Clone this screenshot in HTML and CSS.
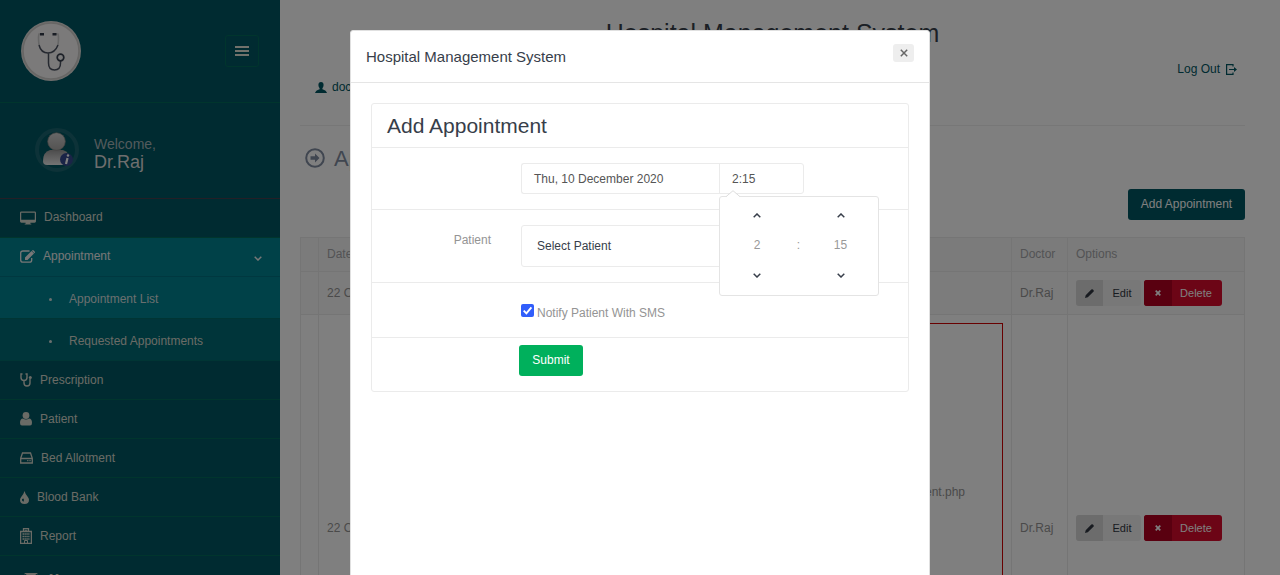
FILE: index.html
```html
<!DOCTYPE html>
<html lang="en">
<head>
<meta charset="utf-8">
<title>Hospital Management System</title>
<link rel="stylesheet" href="styles.css">
</head>
<body>
<div class="page">
  <aside class="sidebar">
    <div class="brand">
      <svg class="logo" width="60" height="60" viewBox="0 0 60 60"><circle cx="30" cy="30" r="30" fill="#dddcd9"/><circle cx="30" cy="30" r="28" fill="#f6f5f5" stroke="#cfcdca" stroke-width="1.600"/><g fill="none"><path d="M20 13h-2q-1 3 0 11M34 13h3q1 3 0 11" stroke="#ccc" stroke-width="1.600"/><path d="M18 24q2 8 9 8t10-8M27.500 32v10q0 7 6 7t6-7v-3" stroke="#4c5361" stroke-width="1.500"/><circle cx="39.500" cy="36.500" r="3.300" stroke="#39404e" stroke-width="1.700"/></g><path d="M19 13.200h4M31.500 13.200h4" stroke="#333b48" stroke-width="2.500"/></svg>
      <span class="toggle"><svg width="14" height="10" viewBox="0 0 14 10"><path d="M0 1h14M0 5h14M0 9h14" stroke="#e4e4d8" stroke-width="2"/></svg></span>
    </div>
    <div class="user">
      <svg width="44" height="44" viewBox="0 0 44 44"><defs><linearGradient id="skin" x1="0" y1="0" x2="0" y2="1"><stop offset="0" stop-color="#d0d0d0"/><stop offset="1" stop-color="#a8a6a4"/></linearGradient><linearGradient id="coat" x1="0" y1="0" x2="0" y2="1"><stop offset="0" stop-color="#999"/><stop offset="1" stop-color="#e8e8e8"/></linearGradient></defs><circle cx="22" cy="22" r="20" fill="none" stroke="#1a6570" stroke-width="4"/><path d="M8 33q0-9 7-11h13q7 2 7 11-1 4-4 4H12q-4 0-4-4z" fill="url(#coat)"/><circle cx="21.500" cy="13.500" r="8.800" fill="url(#skin)" stroke="#8a8784" stroke-width=".7"/><circle cx="31.500" cy="31.500" r="6.500" fill="#34488e"/><path d="M32.500 30l-1.500 6" stroke="#fff" stroke-width="2.200"/><circle cx="33" cy="27.500" r="1.200" fill="#fff"/></svg>
      <div class="who"><span>Welcome,</span><strong>Dr.Raj</strong></div>
    </div>
    <nav class="menu">
      <a class="item"><svg width="16" height="14" viewBox="0 0 17 14"><path d="M1.500 0h14Q17 0 17 1.500v9q0 1.500-1.500 1.500H11v1h1v1H5v-1h1v-1H1.500Q0 12 0 10.500v-9Q0 0 1.500 0zM1.300 1.300v7.500h14.400V1.300z" fill="currentColor" fill-rule="evenodd"/></svg><span class="g8">Dashboard</span></a>
      <a class="item open"><svg width="15" height="13" viewBox="0 0 15 13"><path d="M9.500 1H3Q.7 1 .7 3v7q0 2.200 2.300 2.200h6.500q2.200 0 2.200-2.200V8" fill="none" stroke="currentColor" stroke-width="1.300"/><path d="M5 10V7.500L11.500 1 14 3.500 7.500 10zM12.200.4q.8-.7 1.500 0l1 1q.6.8 0 1.500l-.3.3L11.900.8z" fill="currentColor"/></svg><span class="g8">Appointment</span><svg class="chev" width="8" height="5" viewBox="0 0 8 5"><path d="M.7.7L4 4 7.300.7" fill="none" stroke="currentColor" stroke-width="1.500"/></svg></a>
      <a class="sub current"><i></i>Appointment List</a>
      <a class="sub"><i></i>Requested Appointments</a>
      <a class="item"><svg width="12" height="14" viewBox="0 0 12 14"><path d="M2.500 1H1v3.500q0 3 3 3t3-3V1H5.500M4 7.500V10q0 3 3 3t3-3V6" fill="none" stroke="currentColor" stroke-width="1.400"/><circle cx="10.300" cy="4.500" r="1.500" fill="currentColor"/></svg><span class="g8">Prescription</span></a>
      <a class="item"><svg width="12" height="14" viewBox="0 0 12 14"><circle cx="6" cy="3.500" r="3.400" fill="currentColor"/><path d="M3 6.500Q0 6.500 0 11q0 2.500 2 2.500h8q2 0 2-2.500 0-4.500-3-4.500-3 1.800-6 0z" fill="currentColor"/></svg><span class="g8">Patient</span></a>
      <a class="item"><svg width="13" height="12" viewBox="0 0 13 12"><path d="M.7 6.300L2.500 1h8l1.800 5.300V11H.7zM.7 6.500h11.600" fill="none" stroke="currentColor" stroke-width="1.300"/><path d="M7 8.700h1.500M9.300 8.700h1.500" stroke="currentColor"/></svg><span class="g8">Bed Allotment</span></a>
      <a class="item"><svg width="9" height="13" viewBox="0 0 9 13"><path d="M4.500 0Q5.300 3 7.500 5.500 9 7.200 9 8.700 9 13 4.500 13T0 8.700Q0 7.200 1.500 5.500 3.700 3 4.500 0zM2 8q-.5 2 1.500 2.800Q4.500 9 3.500 7.500z" fill="currentColor" fill-rule="evenodd"/></svg><span class="g8">Blood Bank</span></a>
      <a class="item"><svg width="12" height="16" viewBox="0 0 12 16"><path d="M.6 3.500h10.800v11.900H.6zM3.500 3.500V.7h5v2.800" fill="none" stroke="currentColor" stroke-width="1.300"/><path d="M2.500 6h7M2.500 8.500h7M2.500 11h7" stroke="currentColor" stroke-width="1.300" stroke-dasharray="1.500 .4"/><path d="M4.500 15v-2.500h3V15M4.700 2.300h2.600" fill="none" stroke="currentColor"/></svg><span class="g8">Report</span></a>
      <a class="item mail"><svg width="14" height="10" viewBox="0 0 14 10"><path d="M0 0h14L7 5zM0 1.500l7 5 7-5V10H0z" fill="currentColor"/></svg><span>Message</span></a>
    </nav>
  </aside>
  <main class="main">
    <h2 class="site">Hospital Management System</h2>
    <div class="account">
      <a class="name"><svg width="12" height="11" viewBox="0 0 12 11"><path d="M6 0Q8.600 0 8.600 3q0 2-1.200 3.200v1Q11.500 8.500 12 11H0q.5-2.500 4.600-3.800v-1Q3.400 5 3.400 3 3.400 0 6 0z" fill="currentColor"/></svg>doctor</a>
      <a class="logout">Log Out<svg width="11" height="11" viewBox="0 0 11 11"><path d="M7 2.500V.6H.6v9.800H7V8.500M3 5.500h6" fill="none" stroke="currentColor" stroke-width="1.200"/><path d="M8 3l3 2.500L8 8z" fill="currentColor"/></svg></a>
    </div>
    <h3 class="heading"><svg width="20" height="20" viewBox="0 0 20 20"><circle cx="10" cy="10" r="8.800" fill="none" stroke="currentColor" stroke-width="2"/><path d="M5.500 8.300H10V5.600l4.500 4.400-4.500 4.400v-2.700H5.500z" fill="currentColor"/></svg>Appointment</h3>
    <div class="actions"><a class="add">Add Appointment</a></div>
    <div class="table">
      <div class="tr shade head"><div></div><div>Date</div><div></div><div>Doctor</div><div>Options</div></div>
      <div class="tr shade first"><div></div><div>22 Oct</div><div></div><div>Dr.Raj</div><div class="opts"><a class="btn edit"><b><svg width="9" height="9" viewBox="0 0 9 9"><path d="M0 9l.7-2.800L6.300.6q.8-.8 1.600 0l.5.500q.8.800 0 1.600L2.800 8.300z" fill="currentColor"/></svg></b><span>Edit</span></a><a class="btn del"><b><svg width="6" height="6" viewBox="0 0 6 6"><path d="M.7.7l4.600 4.600M5.300.7L.7 5.300" stroke="currentColor" stroke-width="1.700"/></svg></b><span>Delete</span></a></div></div>
      <div class="tr second"><div></div><div>22 Oct</div><div class="notice"><p>ent.php</p></div><div>Dr.Raj</div><div class="opts"><a class="btn edit"><b><svg width="9" height="9" viewBox="0 0 9 9"><path d="M0 9l.7-2.800L6.300.6q.8-.8 1.600 0l.5.500q.8.800 0 1.600L2.800 8.300z" fill="currentColor"/></svg></b><span>Edit</span></a><a class="btn del"><b><svg width="6" height="6" viewBox="0 0 6 6"><path d="M.7.7l4.600 4.600M5.300.7L.7 5.300" stroke="currentColor" stroke-width="1.700"/></svg></b><span>Delete</span></a></div></div>
    </div>
  </main>
</div>
<div class="backdrop">
  <section class="modal">
    <header class="modal-head"><h4>Hospital Management System</h4><button class="close"><svg width="8" height="8" viewBox="0 0 8 8"><path d="M.8.800l6.400 6.400M7.200.8L.8 7.200" stroke="#666" stroke-width="1.500"/></svg></button></header>
    <div class="panel">
      <h3 class="panel-title">Add Appointment</h3>
      <div class="row when"><label></label>
        <div class="datetime"><div class="date">Thu, 10 December 2020</div><div class="time">2:15
          <div class="picker">
            <svg class="tip" width="14" height="7" viewBox="0 0 14 7"><path d="M0 7l7-6.300L14 7z" fill="#fff"/><path d="M0 6.700l7-6 7 6" fill="none" stroke="#ddd"/></svg>
            <svg width="8" height="5" viewBox="0 0 8 5"><path d="M.7 4.200L4 1l3.300 3.200" fill="none" stroke="#373e4a" stroke-width="1.500"/></svg><span></span><svg width="8" height="5" viewBox="0 0 8 5"><path d="M.7 4.200L4 1l3.300 3.200" fill="none" stroke="#373e4a" stroke-width="1.500"/></svg>
            <span>2</span><span>:</span><span>15</span>
            <svg width="8" height="5" viewBox="0 0 8 5"><path d="M.7.8L4 4 7.300.8" fill="none" stroke="#373e4a" stroke-width="1.500"/></svg><span></span><svg width="8" height="5" viewBox="0 0 8 5"><path d="M.7.8L4 4 7.300.8" fill="none" stroke="#373e4a" stroke-width="1.500"/></svg>
          </div></div></div>
      </div>
      <div class="row patient"><label>Patient</label><div class="select">Select Patient</div></div>
      <div class="row notify"><label></label><div class="check"><svg width="13" height="13" viewBox="0 0 13 13"><rect width="13" height="13" rx="2" fill="#315efb"/><path d="M2.700 6.700l2.700 2.700 5-6" fill="none" stroke="#fff" stroke-width="1.900"/></svg>Notify Patient With SMS</div></div>
      <div class="row send"><button class="submit">Submit</button></div>
    </div>
  </section>
</div>
</body>
</html>
```
FILE: styles.css
```css
* { box-sizing: border-box; }
html, body { margin: 0; height: 575px; overflow: hidden; }
body { font: 12px/17px "Liberation Sans", Arial, sans-serif; color: #949494; background: #fff; }
h2, h3, h4, p { margin: 0; font-weight: 400; }
svg { display: block; flex: none; }
button { font: inherit; border: 0; padding: 0; }
.page { display: flex; height: 575px; overflow: hidden; }

.sidebar { width: 280px; flex: none; background: #005662; color: #d5d7cc; height: 640px; }
.brand { height: 103px; border-bottom: 1px solid #006a5a; padding: 0 21px; display: flex; align-items: center; justify-content: space-between; }
.toggle { width: 34px; height: 32px; border: 1px solid #006a5a; border-radius: 3px; display: flex; align-items: center; justify-content: center; }
.user { height: 96px; border-bottom: 1px solid #493f4c; padding: 0 35px 2px; display: flex; align-items: center; gap: 15px; }
.who { display: flex; flex-direction: column; padding-top: 6px; }
.who span { font-size: 14px; line-height: 18px; color: #a6b4b8; }
.who strong { font-size: 18px; line-height: 18px; font-weight: 400; color: #ddd; }
.item { display: flex; align-items: center; height: 39px; padding: 0 18px 0 20px; border-bottom: 1px solid #006a5a; }
.menu .item:first-child, .item.open { padding-bottom: 1px; }
.g8 { margin-left: 8px; }
.item.open { background: #008290; color: #eee; border-color: #007080; }
.chev { margin-left: auto; margin-top: 4px; }
.sub { display: flex; align-items: center; height: 42px; padding: 3px 0 0 49px; background: #006a74; border-bottom: 1px solid #006a68; }
.sub.current { background: #008290; color: #d5dfdf; }
.sub i { width: 3px; height: 3px; border-radius: 50%; background: #d5dfdf; margin-right: 17px; }
.mail { align-items: flex-start; padding: 17px 0 0 24px; }
.mail span { margin: -2px 0 0 11px; font-weight: 700; }

.main { flex: 1; padding: 0 35px 0 20px; display: flex; flex-direction: column; }
.site { text-align: center; font-size: 25px; line-height: 30px; color: #373e4a; margin-top: 18px; }
.account { height: 78px; border-bottom: 1px solid #eee; display: flex; flex: none; justify-content: space-between; color: #005662; padding: 13px 8px 0 15px; }
.account a { display: flex; align-items: center; height: 17px; gap: 5px; }
.account .logout { gap: 6px; }
.account .name { margin-top: 18px; }
.heading { display: flex; flex: none; align-items: center; gap: 9px; height: 24px; margin-top: 20px; padding-left: 5px; font-size: 22px; color: #818da1; }
.actions { display: flex; flex: none; justify-content: flex-end; margin-top: 19px; }
.add { background: #005662; color: #fff; border-radius: 3px; width: 117px; height: 31px; line-height: 31px; text-align: center; }
.table { margin-top: 17px; border: 1px solid #ebebeb; border-bottom: 0; flex: none; }
.tr { display: grid; grid-template-columns: 18px 112px 581px 56px 1fr; border-bottom: 1px solid #ebebeb; }
.tr > div { border-right: 1px solid #ebebeb; padding-left: 8px; display: flex; align-items: center; }
.tr > div:last-child { border-right: 0; }
.shade { background: #f8f8f8; }
.head { height: 34px; background: #f7f7f7; color: #a6a7aa; }
.first { height: 43px; }
.second { height: 427px; }
.tr > div.notice { padding: 8px; align-items: stretch; }
.notice p { flex: 1; border: 1px solid #d00000; text-align: right; padding: 160px 37px 0 0; }
.opts { gap: 3px; }
.btn { display: flex; height: 26px; border-radius: 3px; overflow: hidden; line-height: 26px; font-size: 11px; }
.btn b { display: flex; align-items: center; justify-content: center; }
.btn span { text-align: center; }
.edit { width: 65px; background: #f0f0f1; color: #303641; }
.edit b { width: 27px; background: #d8d8d8; }
.edit span { width: 38px; }
.del { width: 78px; background: #d90a2c; color: #fff; }
.del b { width: 28px; background: #b30020; }
.del span { width: 48px; }

.account { height: 78px; }
.site { flex: none; }

.backdrop { position: fixed; inset: 0; background: rgba(0,0,0,.5); padding: 30px 0 0 350px; overflow: hidden; }
.modal { width: 580px; height: 600px; background: #fff; border: 1px solid #e0e0e0; border-radius: 3px 3px 0 0; }
.modal-head { height: 52px; border-bottom: 1px solid #e5e5e5; display: flex; justify-content: space-between; padding: 13px 15px; }
.modal-head h4 { font-size: 15px; line-height: 26px; color: #373e4a; }
.close { width: 21px; height: 18px; background: #eee; border-radius: 3px; display: flex; align-items: center; justify-content: center; }
.panel { margin: 20px; border: 1px solid #ebebeb; border-radius: 3px; height: 289px; }
.panel-title { height: 44px; border-bottom: 1px solid #ebebeb; padding-left: 15px; font-size: 21px; line-height: 44px; color: #373e4a; }
.row { display: flex; border-bottom: 1px solid #ebebeb; }
.row label { width: 119px; margin-right: 30px; text-align: right; }
.row:last-child { border-bottom: 0; }
.when { height: 62px; padding-top: 15px; }
.datetime { display: flex; color: #555; }
.date, .time { height: 31px; border: 1px solid #ebebeb; line-height: 30px; padding-left: 12px; }
.date { width: 199px; border-radius: 3px 0 0 3px; border-right: 0; }
.time { width: 85px; border-radius: 0 3px 3px 0; position: relative; margin-left: -1px; }
.picker { position: absolute; left: -1px; top: 32px; width: 160px; height: 100px; border: 1px solid #e4e4e4; border-radius: 3px; background: #fff; color: #999; display: grid; grid-template-columns: 74px 9px 75px; grid-template-rows: 30px 30px 30px; place-items: center; padding-top: 3px; line-height: 17px; z-index: 2; }
.tip { position: absolute; left: 6px; top: -7px; }
.patient { height: 73px; padding-top: 15px; }
.patient label { padding-top: 7px; }
.select { width: 284px; height: 42px; border: 1px solid #ebebeb; border-radius: 3px; padding-left: 15px; line-height: 40px; color: #373e4a; }
.notify { height: 55px; padding-top: 21px; }
.check { display: flex; gap: 3px; line-height: 19px; }
.send { padding: 7px 0 0 147px; }
.submit { width: 64px; height: 31px; background: #00b05c; color: #fff; border-radius: 3px; font-weight: 400; }
```
